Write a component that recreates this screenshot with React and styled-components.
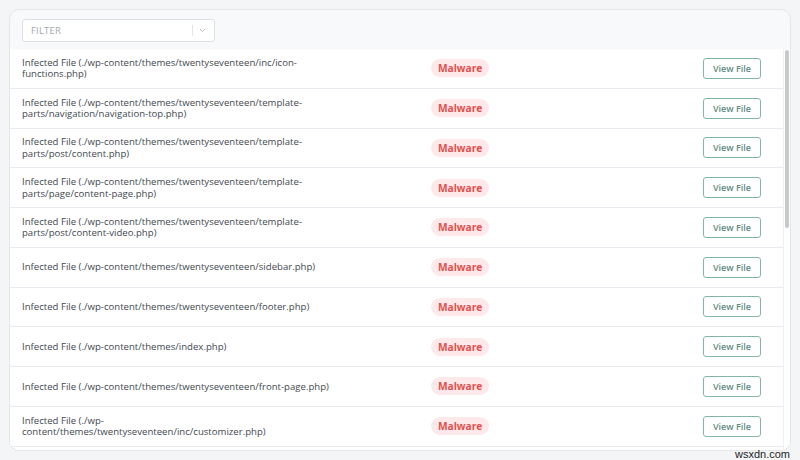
import React from "react";
import styled, { createGlobalStyle } from "styled-components";

const Global = createGlobalStyle`
  html, body { margin: 0; padding: 0; background: #f4f5f7; }
  body { font-family: "Open Sans", "Noto Sans", sans-serif; }
  * { box-sizing: border-box; }
`;

const Page = styled.div`
  position: relative;
  width: 800px;
  height: 460px;
  padding: 9px 9px 9px 9px;
  overflow: hidden;
`;

const Card = styled.div`
  background: #f8f9fb;
  border: 1px solid #e3e6eb;
  border-radius: 10px;
  overflow: hidden;
  display: flex;
  flex-direction: column;
  height: 442px;
`;

const Header = styled.div`
  padding: 9px 12px 6px 12px;
  height: 39px;
`;

const FilterBox = styled.div`
  width: 193px;
  height: 23px;
  background: #fff;
  border: 1px solid #dcdfe4;
  border-radius: 3px;
  display: flex;
  align-items: center;
  padding-left: 8px;
`;

const Placeholder = styled.span`
  flex: 1;
  font-size: 9.5px;
  color: #a3a8b0;
  letter-spacing: 0.2px;
`;

const Indicator = styled.div`
  display: flex;
  align-items: center;
  height: 100%;
  padding: 0 8px 0 0;
  gap: 6px;
`;

const Sep = styled.span`
  width: 1px;
  height: 11px;
  background: #e2e4e8;
`;

const ListArea = styled.div`
  flex: 1;
  display: flex;
  min-height: 0;
  background: #fff;
`;

const Rows = styled.div`
  flex: 1;
  overflow: hidden;
`;

const Row = styled.div`
  height: 39.75px;
  display: grid;
  grid-template-columns: 409px 1fr auto;
  align-items: center;
  padding: 0 22px 0 12px;
  border-bottom: 1px solid #e8ecf1;
  background: #fff;
`;

const FileText = styled.div`
  font-size: 9.6px;
  line-height: 11.5px;
  color: #42494f;
  max-width: 318px;
`;

const Badge = styled.span`
  justify-self: start;
  display: inline-block;
  height: 18px;
  line-height: 18px;
  padding: 0 7px;
  border-radius: 9px;
  background: #fde9e9;
  color: #e0504f;
  font-size: 10.2px;
  font-weight: 700;
`;

const ViewButton = styled.button`
  width: 58px;
  height: 21px;
  border: 1px solid #84b6a8;
  border-radius: 3px;
  background: #fff;
  color: #5f8c82;
  font-family: "Open Sans", sans-serif;
  font-size: 9px;
  font-weight: 600;
  padding: 0;
  cursor: pointer;
`;

const Track = styled.div`
  width: 7px;
  background: #fff;
  border-left: 1px solid #eef0f3;
  padding: 1px 1px 0 1px;
`;

const Thumb = styled.div`
  width: 4px;
  height: 178px;
  border-radius: 2px;
  background: #c6c8cb;
`;

const Watermark = styled.span`
  position: absolute;
  right: 10px;
  bottom: 0;
  font-family: "Liberation Sans", Arial, sans-serif;
  font-size: 11px;
  line-height: 11px;
  color: #1d1d1d;
`;

const files = [
  "./wp-content/themes/twentyseventeen/inc/icon-functions.php",
  "./wp-content/themes/twentyseventeen/template-parts/navigation/navigation-top.php",
  "./wp-content/themes/twentyseventeen/template-parts/post/content.php",
  "./wp-content/themes/twentyseventeen/template-parts/page/content-page.php",
  "./wp-content/themes/twentyseventeen/template-parts/post/content-video.php",
  "./wp-content/themes/twentyseventeen/sidebar.php",
  "./wp-content/themes/twentyseventeen/footer.php",
  "./wp-content/themes/index.php",
  "./wp-content/themes/twentyseventeen/front-page.php",
  "./wp-content/themes/twentyseventeen/inc/customizer.php",
];

const Chevron = () => (
  <svg width="7" height="5" viewBox="0 0 7 5">
    <path d="M1 1l2.5 2.5L6 1" fill="none" stroke="#b9bdc3" strokeWidth="1" />
  </svg>
);

export default function App() {
  return (
    <>
      <Global />
      <Page>
        <Card>
          <Header>
            <FilterBox>
              <Placeholder>FILTER</Placeholder>
              <Indicator>
                <Sep />
                <Chevron />
              </Indicator>
            </FilterBox>
          </Header>
          <ListArea>
            <Rows>
              {files.map((f) => (
                <Row key={f}>
                  <FileText>Infected File ({f})</FileText>
                  <Badge>Malware</Badge>
                  <ViewButton>View File</ViewButton>
                </Row>
              ))}
            </Rows>
            <Track>
              <Thumb />
            </Track>
          </ListArea>
        </Card>
        <Watermark>wsxdn.com</Watermark>
      </Page>
    </>
  );
}
